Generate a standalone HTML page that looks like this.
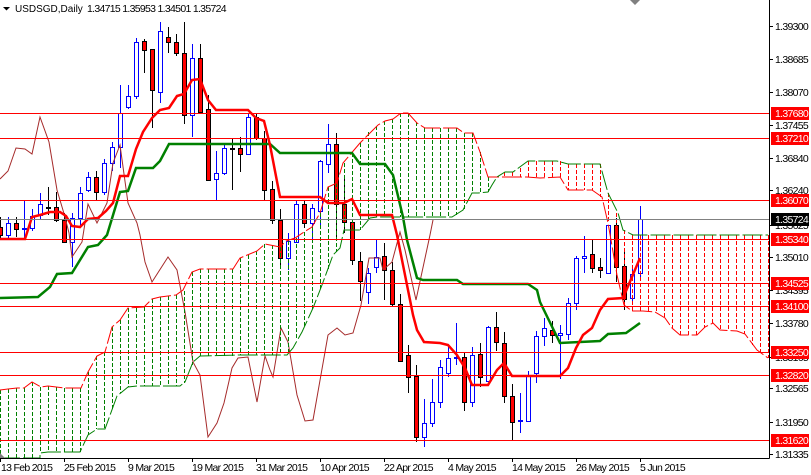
<!DOCTYPE html>
<html><head><meta charset="utf-8"><style>
html,body{margin:0;padding:0;background:#fff;width:811px;height:475px;overflow:hidden}
svg{display:block}
text{font-family:"Liberation Sans",sans-serif;font-size:10.5px;letter-spacing:-.7px;fill:#000}
.w text{fill:#fff}
.c{shape-rendering:crispEdges}
</style></head><body>
<svg width="811" height="475" viewBox="0 0 811 475" xmlns="http://www.w3.org/2000/svg">
<rect width="811" height="475" fill="#fff"/>
<!-- wicks -->
<path class="c" fill="none" stroke="#000" d="M.5 217V238M16.5 217V237M48.5 187V215M56.5 192V222M64.5 213V243M96.5 171V200M144.5 39V73M152.5 49V128M168.5 27V53M176.5 34V56M184.5 22V124M200.5 44V113M208.5 95V181M232.5 138V190M240.5 137V172M256.5 113V140M264.5 131V200M272.5 181V224M280.5 209V268M304.5 200V228M336.5 133V238M344.5 179V233M352.5 222V265M360.5 252V301M384.5 243V300M392.5 262V306M400.5 294V362M408.5 345V393M416.5 365V442M464.5 352V411M480.5 343V387M496.5 312V351M504.5 332V403M512.5 384V440M552.5 321V343M592.5 240V273M600.5 258V278M616.5 218V282M624.5 250V310"/>
<path class="c" fill="none" stroke="#00f" d="M8.5 217V238M24.5 201V238M32.5 209V231M40.5 193V220M72.5 213V267M80.5 187V225M88.5 172V192M104.5 159V195M112.5 142V171M120.5 85V168M128.5 85V109M136.5 38V99M160.5 22V103M192.5 44V137M216.5 151V200M224.5 145V175M248.5 113V155M288.5 233V270M296.5 200V242M312.5 204V240M320.5 160V226M328.5 124V173M368.5 268V304M376.5 240V273M424.5 399V447M432.5 379V427M440.5 360V408M448.5 347V377M456.5 323V365M472.5 347V407M488.5 326V382M520.5 393V433M528.5 371V421M536.5 331V383M544.5 318V346M560.5 325V379M568.5 298V340M576.5 256V310M584.5 236V273M608.5 225V274M632.5 265V304M640.5 206V278"/>
<!-- bodies -->
<path class="c" fill="#f00" stroke="#000" d="M-1.5 227.5h4v8h-4zM14.5 223.5h4v6h-4zM46.5 207.5h4v1h-4zM54.5 207.5h4v13h-4zM62.5 220.5h4v22h-4zM94.5 177.5h4v15h-4zM142.5 41.5h4v9h-4zM150.5 49.5h4v41h-4zM166.5 37.5h4v5h-4zM174.5 42.5h4v11h-4zM182.5 53.5h4v62h-4zM198.5 58.5h4v54h-4zM206.5 109.5h4v71h-4zM230.5 148.5h4v1h-4zM238.5 148.5h4v6h-4zM254.5 117.5h4v21h-4zM262.5 138.5h4v52h-4zM270.5 189.5h4v31h-4zM278.5 220.5h4v38h-4zM302.5 204.5h4v19h-4zM334.5 144.5h4v60h-4zM342.5 204.5h4v18h-4zM350.5 222.5h4v38h-4zM358.5 261.5h4v20h-4zM382.5 256.5h4v14h-4zM390.5 270.5h4v34h-4zM398.5 304.5h4v57h-4zM406.5 355.5h4v22h-4zM414.5 376.5h4v61h-4zM462.5 357.5h4v45h-4zM478.5 354.5h4v23h-4zM494.5 327.5h4v15h-4zM502.5 343.5h4v53h-4zM510.5 396.5h4v26h-4zM550.5 330.5h4v5h-4zM590.5 254.5h4v14h-4zM598.5 267.5h4v3h-4zM614.5 225.5h4v42h-4zM622.5 266.5h4v33h-4z"/>
<path class="c" fill="#fff" stroke="#00f" d="M6.5 223.5h4v12h-4zM22.5 228.5h4v1h-4zM30.5 216.5h4v12h-4zM38.5 204.5h4v11h-4zM70.5 218.5h4v24h-4zM78.5 193.5h4v25h-4zM86.5 177.5h4v13h-4zM102.5 163.5h4v29h-4zM110.5 147.5h4v16h-4zM118.5 113.5h4v34h-4zM126.5 96.5h4v11h-4zM134.5 42.5h4v54h-4zM158.5 31.5h4v61h-4zM190.5 58.5h4v57h-4zM214.5 173.5h4v6h-4zM222.5 148.5h4v25h-4zM246.5 117.5h4v37h-4zM286.5 241.5h4v17h-4zM294.5 204.5h4v38h-4zM310.5 208.5h4v15h-4zM318.5 161.5h4v50h-4zM326.5 144.5h4v20h-4zM366.5 273.5h4v19h-4zM374.5 257.5h4v10h-4zM422.5 423.5h4v14h-4zM430.5 402.5h4v21h-4zM438.5 367.5h4v35h-4zM446.5 358.5h4v15h-4zM454.5 357.5h4v1h-4zM470.5 355.5h4v47h-4zM486.5 327.5h4v54h-4zM518.5 420.5h4v1h-4zM526.5 376.5h4v45h-4zM534.5 336.5h4v37h-4zM542.5 328.5h4v8h-4zM558.5 333.5h4v2h-4zM566.5 303.5h4v31h-4zM574.5 258.5h4v45h-4zM582.5 256.5h4v2h-4zM606.5 225.5h4v48h-4zM630.5 274.5h4v24h-4zM638.5 219.5h4v54h-4z"/>
<!-- chikou -->
<polyline fill="none" stroke="#a52a2a" points="0,179 8,171 16,148 25,149 32,154 40,117 49,142 57,190 65,217 69,233 72,257 82,242 88,204 97,223 107,203 113,163 120,145 128,203 137,223 140,235 145,262 152,282 168,257 177,270 185,312 193,362 200,375 208,437 217,423 224,403 232,368 238,358 248,357 257,402 265,356 270,370 273,377 281,328 288,342 297,395 305,421 313,420 328,335 337,328 345,335 353,333 361,305 369,258 380,258 383,270 392,262 400,232 405,250 416,300 430,235 433,220"/>
<!-- cloud verticals green -->
<path class="c" fill="none" stroke="#008000" stroke-dasharray="4 2" d="M.5 390V458M8.5 389V458M16.5 388V458M24.5 388V458M32.5 382V458M40.5 387V453M48.5 386V452M56.5 387V452M64.5 388V452M72.5 388V452M80.5 388V452M88.5 372V435M96.5 356V429M104.5 352V429M112.5 327V410M120.5 320V393M128.5 308V387M136.5 308V386M144.5 307V386M152.5 299V386M160.5 297V386M168.5 296V386M176.5 295V386M184.5 291V383M192.5 272V365M200.5 269V356M208.5 269V356M216.5 269V356M224.5 269V356M232.5 269V356M240.5 258V355M248.5 255V355M256.5 251V355M264.5 244V355M272.5 245V355M280.5 247V355M288.5 241V352M296.5 238V340M304.5 232V327M312.5 227V310M320.5 213V290M328.5 187V270M336.5 183V252M344.5 163V230M352.5 153V230M360.5 143V230M368.5 132V220M376.5 126V217M384.5 121V217M392.5 119V217M400.5 113V217M408.5 113V217M416.5 122V217M424.5 128V217M432.5 128V217M440.5 128V217M448.5 128V217M456.5 128V215M464.5 133V210M472.5 133V193M480.5 152V193M488.5 177V192"/>
<!-- cloud verticals red -->
<path class="c" fill="none" stroke="#f00" stroke-dasharray="4 2" d="M504.5 172V177M512.5 172V177M520.5 168V177M528.5 161V177M536.5 161V178M544.5 161V178M552.5 161V178M560.5 161V177M568.5 164V190M576.5 164V190M584.5 164V190M592.5 164V190M600.5 164V197M608.5 193V223M616.5 213V275M624.5 230V305M632.5 235V311M640.5 235V311M648.5 235V311M656.5 235V312M664.5 235V317M672.5 235V328M680.5 235V335M688.5 235V335M696.5 235V335M704.5 235V328M712.5 235V323M720.5 235V330M728.5 235V331M736.5 235V331M744.5 235V334M752.5 235V345M760.5 235V354M768.5 235V358"/>
<!-- senkou edges -->
<polyline fill="none" stroke="#f00" stroke-dasharray="20 3" points="0,390 8,389 17,388 24,388 32,382 41,387 48,386 64,388 81,388 88,372 97,356 105,352 112,327 120,320 128,308 144,307 152,299 160,297 168,296 176,295 183,290 192,272 200,269 233,269 240,258 257,251 265,244 270,245 280,247 286,241 295,238 304,232 312,227 320,213 328,187 337,183 343,163 360,143 378,125 385,121 393,119 401,113 408,113 417,123 425,128 450,128 457,128 464,133 473,133 480,152 488,177 503,177 518,177 527,177 540,178 560,177 568,190 592,190 602,197 608,223 611,240 617,275 624,305 632,311 643,311 655,312 665,318 672,328 680,335 697,335 705,327 713,323 720,330 737,331 745,334 757,350 768,358"/>
<polyline fill="none" stroke="#008000" stroke-dasharray="20 3" points="0,458 40,458 40,453 48,452 80,452 88,435 97,429 105,429 117,396 128,387 137,386 180,386 185,382 193,362 200,356 240,355 287,355 293,348 302,332 313,308 322,285 333,255 340,248 344,230 360,230 370,218 377,217 452,217 463,210 472,193 478,193 488,192 492,185 497,177 505,172 513,172 528,161 557,161 568,164 600,164 608,193 618,213 623,230 633,235 768,235"/>
<!-- kijun -->
<polyline fill="none" stroke="#008000" stroke-width="2.5" points="0,298 38,297 50,287 57,274 72,273 88,247 98,245 107,235 120,192 128,191 136,168 153,168 160,161 169,144 270,144 280,153 352,153 360,164 385,164 393,175 403,217 407,240 417,278 423,280 457,280 463,284 528,284 537,290 540,302 560,343 600,341 608,334 626,333 640,323"/>
<!-- tenkan -->
<polyline fill="none" stroke="#f00" stroke-width="2.5" points="0,239 25,239 32,217 40,215 50,212 60,212 66,216 72,226 80,227 88,219 98,218 106,211 113,203 120,176 128,176 136,149 143,132 152,118 160,110 169,108 177,96 184,94 192,80 200,79 208,100 216,110 248,110 256,118 264,121 270,145 280,197 320,197 328,203 344,203 352,199 360,215 392,215 397,235 413,315 417,330 424,342 440,343 448,345 457,355 465,368 472,385 488,385 497,370 504,363 512,376 560,376 568,368 576,348 583,335 592,328 600,310 608,299 623,298 640,258"/>
<!-- hlines -->
<path class="c" fill="none" stroke="#808080" d="M0 219.5H769"/>
<path class="c" fill="none" stroke="#f00" d="M0 113.5H769M0 138.5H769M0 200.5H769M0 239.5H769M0 283.5H769M0 306.5H769M0 352.5H769M0 375.5H769M0 440.5H769"/>
<!-- markers -->
<path fill="#808080" d="M630 0H640L635 5ZM0 453L5 458H0Z"/>
<!-- header -->
<path fill="#000" d="M3 7H10L6.500 10.500Z"/>
<text x="15" y="12" style="letter-spacing:0;font-size:10px">USDSGD,Daily</text>
<text x="87" y="12">1.34715 1.35953 1.34501 1.35724</text>
<!-- axes -->
<path class="c" fill="none" stroke="#000" d="M769.500 0V458.500M0 458.500H769.500M769 26.500h4M769 59.500h4M769 92.500h4M769 125.500h4M769 158.500h4M769 190.500h4M769 225.500h4M769 257.500h4M769 290.500h4M769 323.500h4M769 357.500h4M769 388.500h4M769 422.500h4M769 454.500h4M.5 458V462M64.500 458V462M128.500 458V462M192.500 458V462M256.500 458V462M320.500 458V462M384.500 458V462M448.500 458V462M512.500 458V462M576.500 458V462M640.500 458V462"/>
<!-- price labels -->
<text x="775" y="30">1.39300</text>
<text x="775" y="63">1.38685</text>
<text x="775" y="96">1.38070</text>
<text x="775" y="129">1.37455</text>
<text x="775" y="162">1.36840</text>
<text x="775" y="194">1.36240</text>
<text x="775" y="229">1.35625</text>
<text x="775" y="261">1.35010</text>
<text x="775" y="294">1.34395</text>
<text x="775" y="327">1.33780</text>
<text x="775" y="361">1.33165</text>
<text x="775" y="392">1.32565</text>
<text x="775" y="426">1.31950</text>
<text x="775" y="458">1.31335</text>
<g fill="#f00">
<rect x="771" y="107" width="38" height="13"/>
<rect x="771" y="132" width="38" height="13"/>
<rect x="771" y="194" width="38" height="13"/>
<rect x="771" y="233" width="38" height="13"/>
<rect x="771" y="277" width="38" height="13"/>
<rect x="771" y="300" width="38" height="13"/>
<rect x="771" y="346" width="38" height="13"/>
<rect x="771" y="369" width="38" height="13"/>
<rect x="771" y="434" width="38" height="13"/>
</g>
<rect x="771" y="213" width="38" height="13" fill="#000"/>
<g class="w">
<text x="775" y="117">1.37680</text>
<text x="775" y="142">1.37210</text>
<text x="775" y="204">1.36070</text>
<text x="775" y="223">1.35724</text>
<text x="775" y="243">1.35340</text>
<text x="775" y="287">1.34525</text>
<text x="775" y="310">1.34100</text>
<text x="775" y="356">1.33250</text>
<text x="775" y="379">1.32820</text>
<text x="775" y="444">1.31620</text>
</g>
<!-- date labels -->
<text x="1" y="471">13 Feb 2015</text>
<text x="64" y="471">25 Feb 2015</text>
<text x="128" y="471">9 Mar 2015</text>
<text x="192" y="471">19 Mar 2015</text>
<text x="256" y="471">31 Mar 2015</text>
<text x="320" y="471">10 Apr 2015</text>
<text x="384" y="471">22 Apr 2015</text>
<text x="448" y="471">4 May 2015</text>
<text x="512" y="471">14 May 2015</text>
<text x="576" y="471">26 May 2015</text>
<text x="640" y="471">5 Jun 2015</text>
</svg>
</body></html>
